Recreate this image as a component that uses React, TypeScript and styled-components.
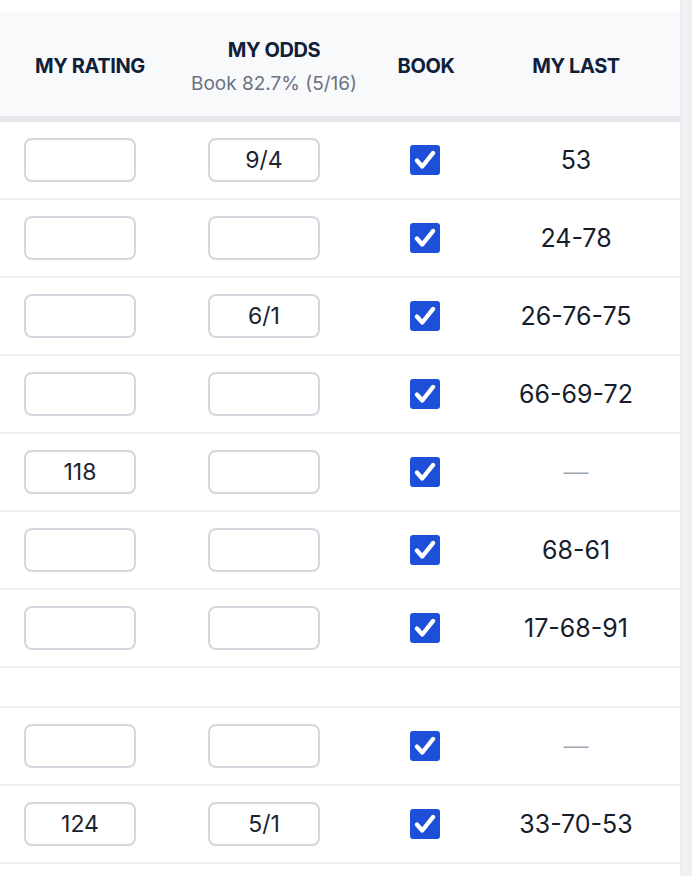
import React from "react";
import styled, { createGlobalStyle } from "styled-components";

const Global = createGlobalStyle`
  html, body { margin: 0; padding: 0; background: #ffffff; }
  body { font-family: Inter, "Noto Sans", sans-serif; }
  * { box-sizing: border-box; }
`;

const Page = styled.div`
  display: flex;
  width: 692px;
  height: 876px;
  overflow: hidden;
  background: #ffffff;
`;

const TableArea = styled.div`
  width: 680px;
  padding-top: 12px;
  display: flex;
  flex-direction: column;
`;

const ScrollTrack = styled.div`
  width: 12px;
  background: #eff0f4;
  border-left: 1px solid #e9ebef;
`;

const COLS = "180px 188px 104px 208px";

const HeaderRow = styled.div`
  display: grid;
  grid-template-columns: ${COLS};
  height: 110px;
  flex-shrink: 0;
  background: #f8f9fb;
  border-bottom: 6px solid #e5e7eb;
`;

const HeadCell = styled.div<{ $pl?: number }>`
  display: flex;
  flex-direction: column;
  align-items: center;
  justify-content: center;
  padding-left: ${(p) => p.$pl ?? 0}px;
  padding-top: 4px;
`;

const HeadTitle = styled.div`
  font-size: 20px;
  font-weight: 700;
  color: #0f2038;
  letter-spacing: -0.4px;
  text-transform: uppercase;
  white-space: nowrap;
`;

const HeadSub = styled.div`
  margin-top: 10px;
  font-size: 19px;
  font-weight: 400;
  color: #6b7280;
  letter-spacing: 0px;
  white-space: nowrap;
`;

const Row = styled.div<{ $empty?: boolean }>`
  display: grid;
  grid-template-columns: ${COLS};
  height: ${(p) => (p.$empty ? 40 : 78)}px;
  flex-shrink: 0;
  border-bottom: 2px solid #f1f2f4;
`;

const Cell = styled.div<{ $pl?: number; $start?: boolean }>`
  display: flex;
  align-items: center;
  justify-content: ${(p) => (p.$start ? "flex-start" : "center")};
  padding-left: ${(p) => p.$pl ?? 0}px;
`;

const Box = styled.div`
  width: 112px;
  height: 44px;
  border: 2px solid #d4d7dd;
  border-radius: 8px;
  display: flex;
  align-items: center;
  justify-content: center;
  font-size: 23px;
  color: #1b2230;
  background: #ffffff;
`;

const Check = styled.div`
  width: 30px;
  height: 30px;
  border-radius: 3px;
  background: #1d4fd8;
  display: flex;
  align-items: center;
  justify-content: center;
`;

const Last = styled.div<{ $dash?: boolean }>`
  font-size: 25px;
  color: ${(p) => (p.$dash ? "#a0a6b1" : "#161d2b")};
  font-weight: ${(p) => (p.$dash ? 300 : 400)};
`;

type RowData = { rating: string; odds: string; last: string } | null;

const rows: RowData[] = [
  { rating: "", odds: "9/4", last: "53" },
  { rating: "", odds: "", last: "24-78" },
  { rating: "", odds: "6/1", last: "26-76-75" },
  { rating: "", odds: "", last: "66-69-72" },
  { rating: "118", odds: "", last: "—" },
  { rating: "", odds: "", last: "68-61" },
  { rating: "", odds: "", last: "17-68-91" },
  null,
  { rating: "", odds: "", last: "—" },
  { rating: "124", odds: "5/1", last: "33-70-53" },
  { rating: "", odds: "", last: "" },
];

const CheckIcon = () => (
  <svg width="26" height="26" viewBox="0 0 24 24">
    <path
      d="M4.5 12.5 L9.5 18 L19.5 5.5"
      fill="none"
      stroke="#ffffff"
      strokeWidth="4"
      strokeLinecap="round"
      strokeLinejoin="round"
    />
  </svg>
);

export default function App() {
  return (
    <>
      <Global />
      <Page>
        <TableArea>
          <HeaderRow>
            <HeadCell>
              <HeadTitle>My Rating</HeadTitle>
            </HeadCell>
            <HeadCell>
              <HeadTitle>My Odds</HeadTitle>
              <HeadSub>Book 82.7% (5/16)</HeadSub>
            </HeadCell>
            <HeadCell $pl={12}>
              <HeadTitle>Book</HeadTitle>
            </HeadCell>
            <HeadCell>
              <HeadTitle>My Last</HeadTitle>
            </HeadCell>
          </HeaderRow>
          {rows.map((r, i) =>
            r === null ? (
              <Row key={i} $empty />
            ) : (
              <Row key={i}>
                <Cell $start $pl={24}>
                  <Box>{r.rating}</Box>
                </Cell>
                <Cell $start $pl={28}>
                  <Box>{r.odds}</Box>
                </Cell>
                <Cell $pl={10}>
                  <Check>
                    <CheckIcon />
                  </Check>
                </Cell>
                <Cell>
                  <Last $dash={r.last === "—"}>{r.last}</Last>
                </Cell>
              </Row>
            )
          )}
        </TableArea>
        <ScrollTrack />
      </Page>
    </>
  );
}
